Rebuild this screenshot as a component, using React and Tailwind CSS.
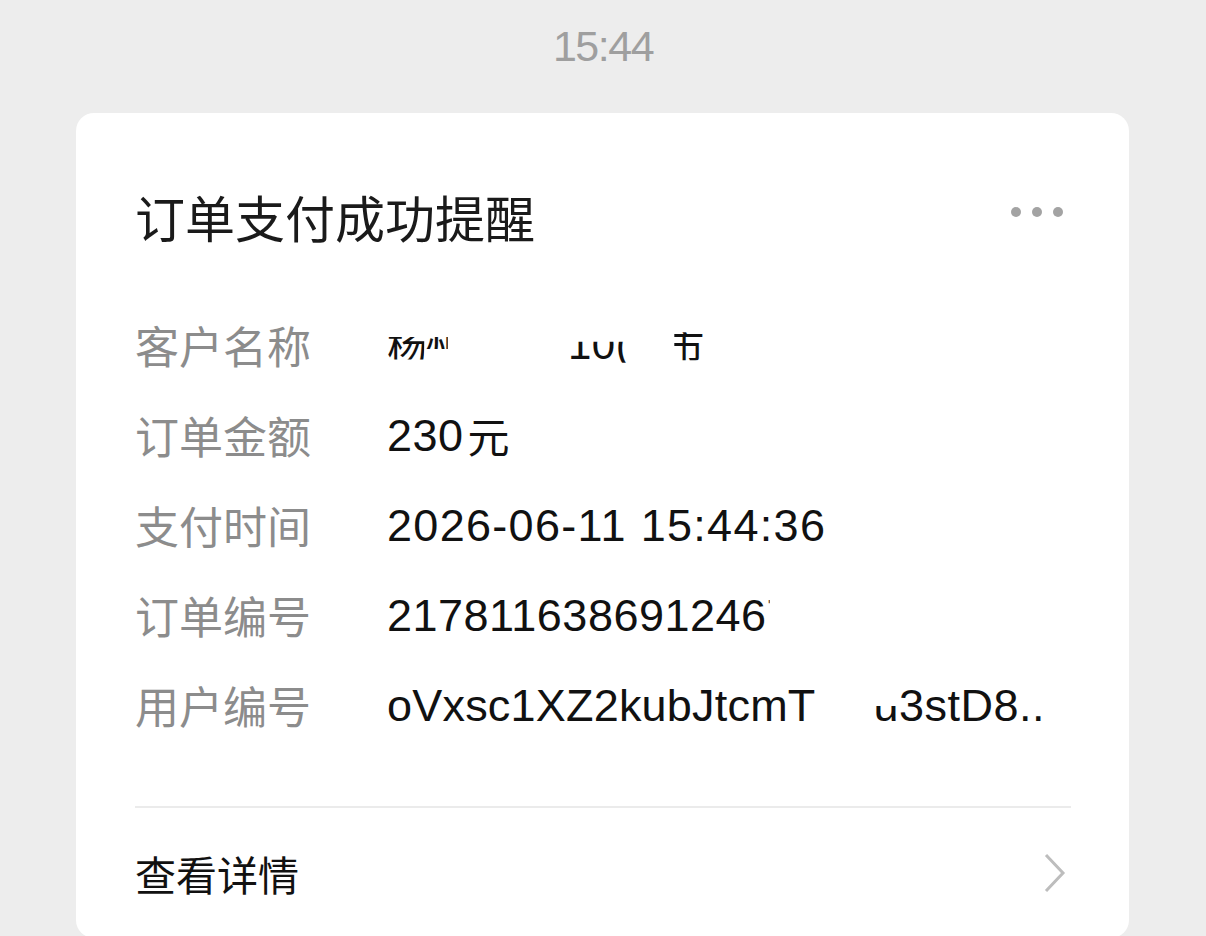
import React from "react";

const rows = [
  { label: "客户名称", key: "name" },
  { label: "订单金额", key: "amount" },
  { label: "支付时间", key: "time" },
  { label: "订单编号", key: "order" },
  { label: "用户编号", key: "user" },
];

function Value({ row }) {
  if (row.key === "name") {
    return (
      <div className="flex items-center font-['Noto_Sans_CJK_SC',sans-serif] text-[40px]">
        <span className="[clip-path:inset(30%_8%_14%_0)]">杨</span>
        <span className="ml-[-2px] [clip-path:inset(30%_45%_40%_0)]">州</span>
        <span className="ml-[102px] font-['Liberation_Sans',sans-serif] text-[42px] [clip-path:inset(42%_0_8%_0)]">10(</span>
        <span className="ml-[34px] [clip-path:inset(18%_0_12%_25%)]">市</span>
      </div>
    );
  }
  if (row.key === "amount") {
    return (
      <div className="flex items-center">
        <span>230</span>
        <span className="ml-[4px] font-['Noto_Sans_CJK_SC',sans-serif] text-[42px]">元</span>
      </div>
    );
  }
  if (row.key === "time") {
    return <div className="tracking-[1.3px]">2026-06-11 15:44:36</div>;
  }
  if (row.key === "order") {
    return (
      <div className="flex items-center">
        <span>217811638691246</span>
        <span className="[clip-path:inset(0_88%_70%_0)]">7</span>
      </div>
    );
  }
  return (
    <div className="flex items-center">
      <span className="tracking-[0.2px]">oVxsc1XZ2kubJtcmT</span>
      <span className="ml-[58px] [clip-path:inset(52%_0_0_0)]">u</span>
      <span>3stD8..</span>
    </div>
  );
}

export default function App() {
  return (
    <div className="h-[936px] overflow-hidden bg-[#ededed] font-['Liberation_Sans','Noto_Sans_CJK_SC',sans-serif]">
      <div className="pt-[25px] text-center text-[43px] leading-none text-[#9f9f9f] tracking-[-1.5px]">
        15:44
      </div>

      <div className="ml-[76px] mt-[45px] w-[1053px] rounded-[18px] bg-white pl-[59px] pr-[58px] pt-[78px]">
        <div className="flex items-center justify-between">
          <h1 className="font-['Noto_Sans_CJK_SC',sans-serif] text-[50px] leading-none text-[#1a1a1a]">
            订单支付成功提醒
          </h1>
          <div className="mb-[8px] mr-[8px] flex gap-[11px]">
            <span className="h-[10px] w-[10px] rounded-full bg-[#a3a3a3]" />
            <span className="h-[10px] w-[10px] rounded-full bg-[#a3a3a3]" />
            <span className="h-[10px] w-[10px] rounded-full bg-[#a3a3a3]" />
          </div>
        </div>

        <div className="mt-[59px]">
          {rows.map((row) => (
            <div key={row.label} className="flex h-[90px] items-center">
              <div className="w-[252px] font-['Noto_Sans_CJK_SC',sans-serif] text-[44px] leading-none text-[#8c8c8c]">
                {row.label}
              </div>
              <div className="text-[45px] leading-none tracking-[0.5px] text-[#111111]">
                <Value row={row} />
              </div>
            </div>
          ))}
        </div>

        <div className="mt-[56px] h-[2px] bg-[#ebebeb]" />

        <div className="flex h-[130px] items-center justify-between">
          <span className="font-['Noto_Sans_CJK_SC',sans-serif] text-[41px] leading-none text-[#111111]">
            查看详情
          </span>
          <svg width="26" height="42" viewBox="0 0 26 42" className="mr-[3px]">
            <path d="M4 3 L21 21 L4 39" fill="none" stroke="#bdbdbd" strokeWidth="3" />
          </svg>
        </div>
      </div>
    </div>
  );
}
